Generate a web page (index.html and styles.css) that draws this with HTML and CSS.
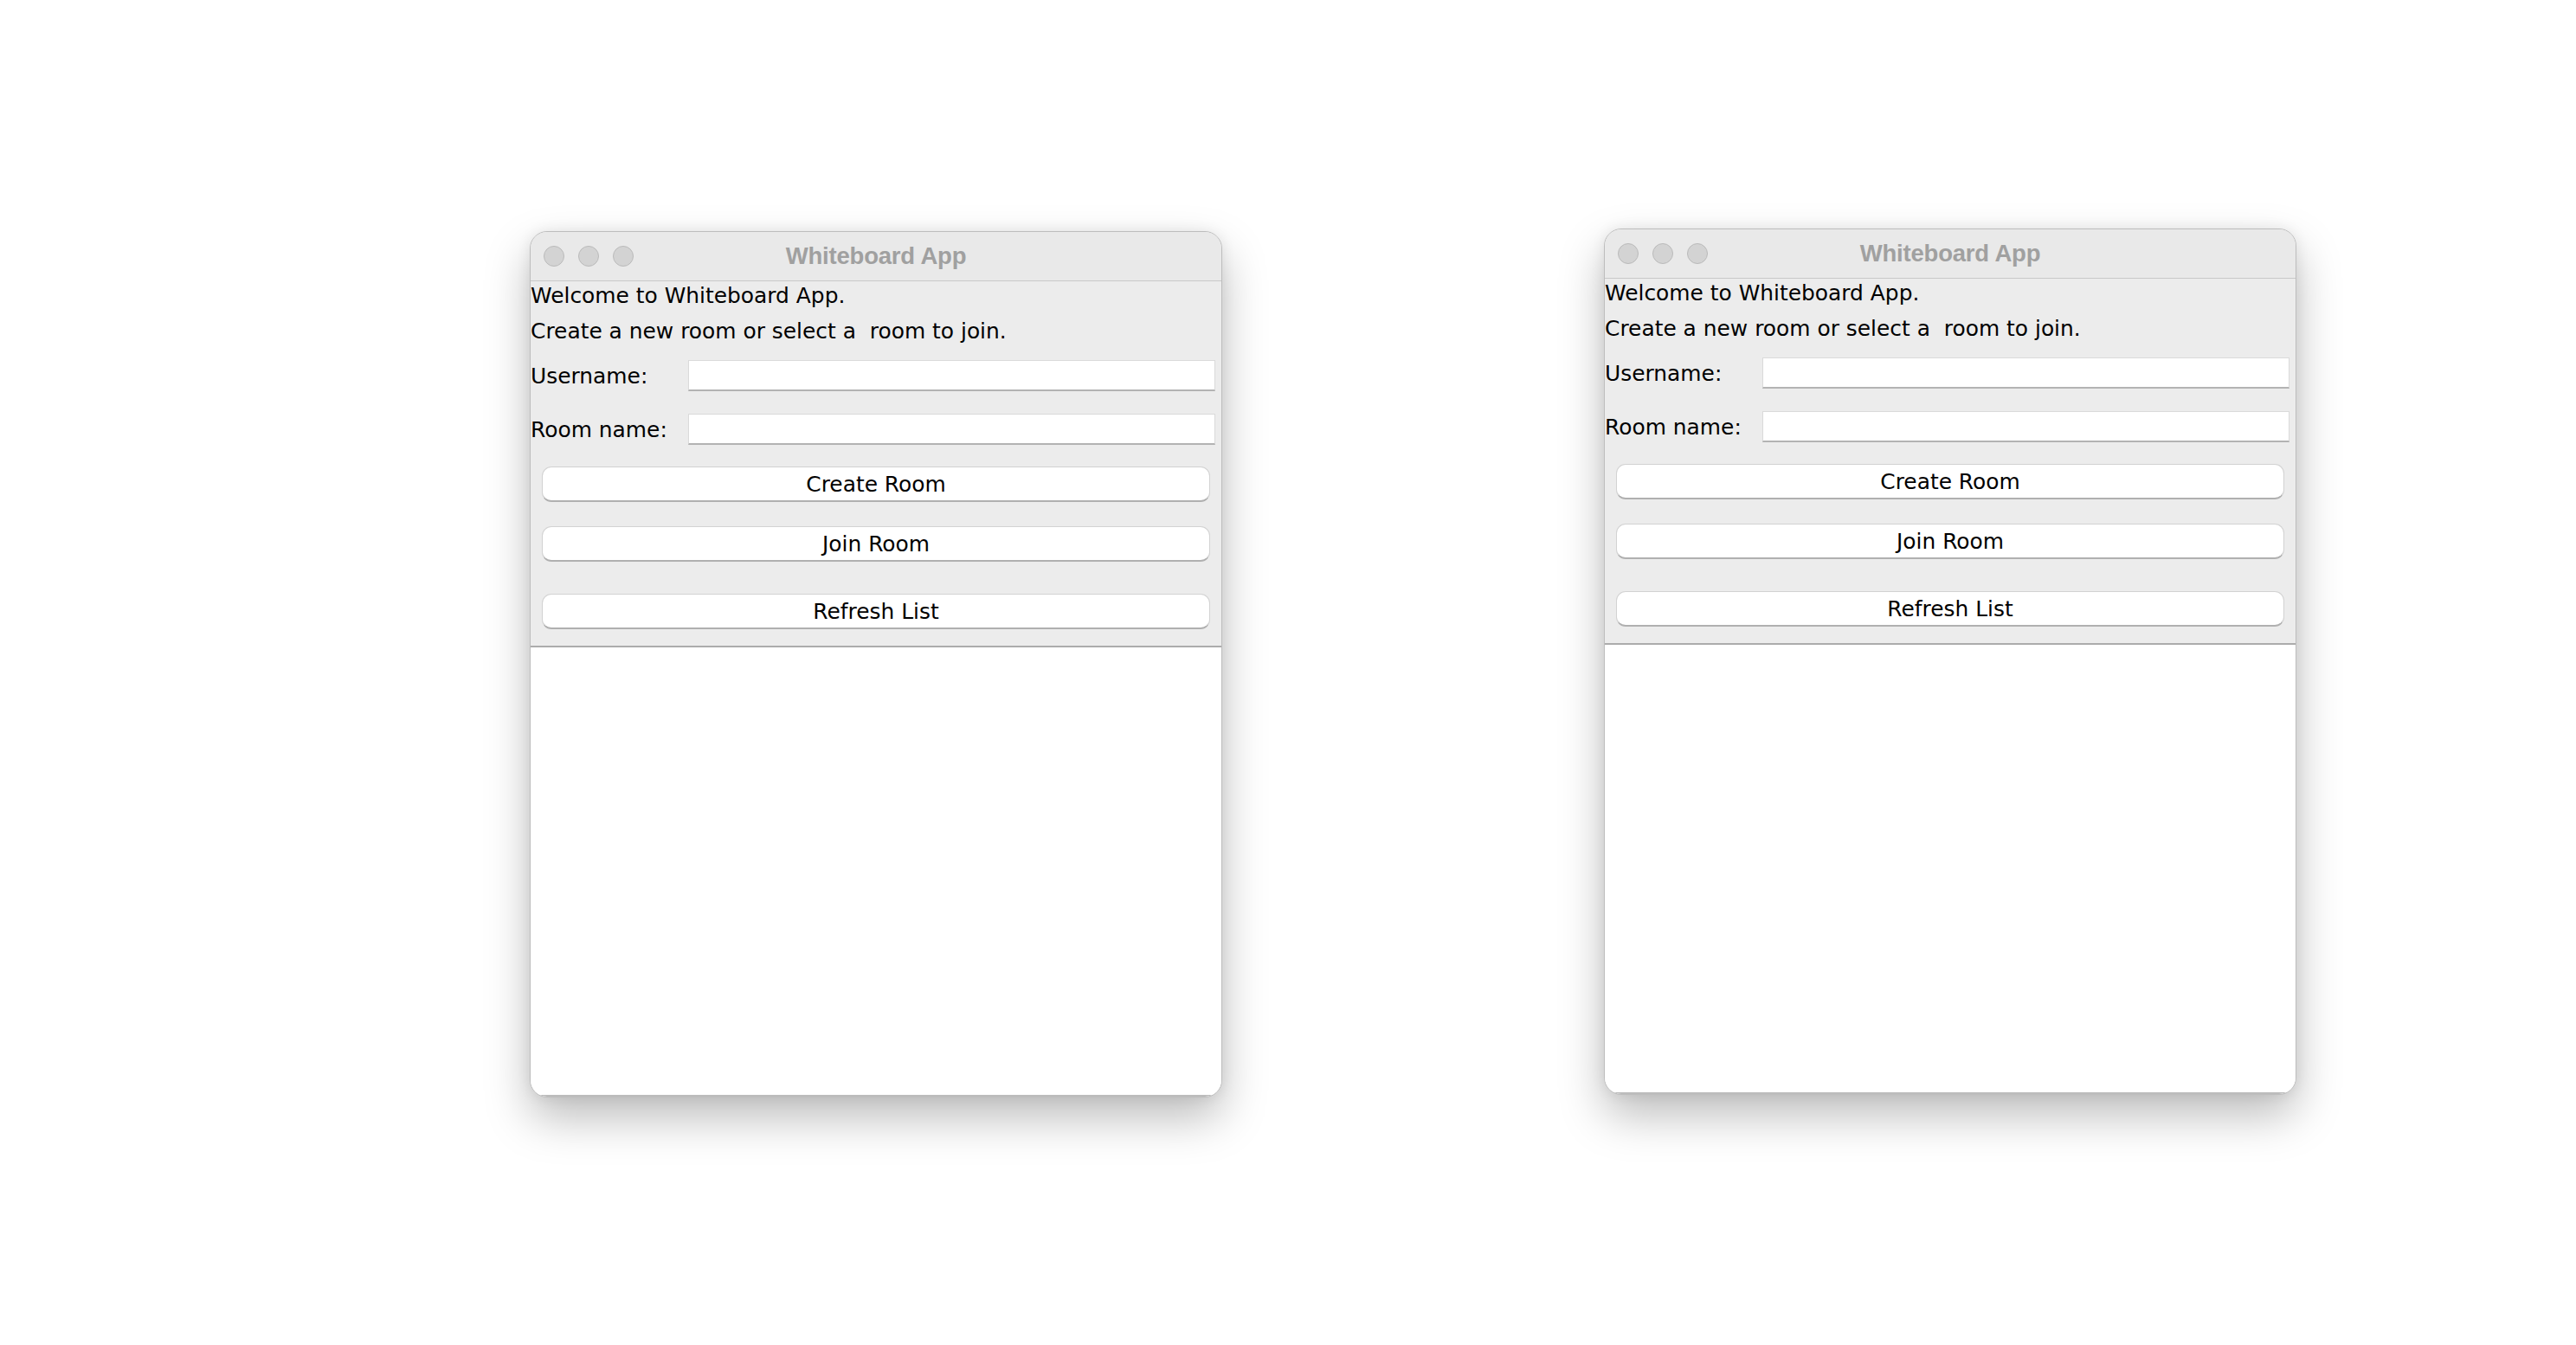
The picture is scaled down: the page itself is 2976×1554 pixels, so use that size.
FILE: index.html
```
<!DOCTYPE html>
<html lang="en">
<head>
<meta charset="utf-8">
<title>Whiteboard App</title>
<link rel="stylesheet" href="styles.css">
</head>
<body>
<div class="desk">
  <div class="window win-a">
    <div class="titlebar">
      <div class="lights"><span class="light"></span><span class="light"></span><span class="light"></span></div>
      <div class="title">Whiteboard App</div>
      <div class="spacer"></div>
    </div>
    <div class="content">
      <div class="line line-1">Welcome to Whiteboard App.</div>
      <div class="line line-2">Create a new room or select a  room to join.</div>
      <div class="field field-1"><span class="label">Username:</span><div class="input"></div></div>
      <div class="field field-2"><span class="label">Room name:</span><div class="input"></div></div>
      <div class="btn btn-1">Create Room</div>
      <div class="btn btn-2">Join Room</div>
      <div class="btn btn-3">Refresh List</div>
    </div>
    <div class="list"></div>
  </div>
  <div class="window win-b">
    <div class="titlebar">
      <div class="lights"><span class="light"></span><span class="light"></span><span class="light"></span></div>
      <div class="title">Whiteboard App</div>
      <div class="spacer"></div>
    </div>
    <div class="content">
      <div class="line line-1">Welcome to Whiteboard App.</div>
      <div class="line line-2">Create a new room or select a  room to join.</div>
      <div class="field field-1"><span class="label">Username:</span><div class="input"></div></div>
      <div class="field field-2"><span class="label">Room name:</span><div class="input"></div></div>
      <div class="btn btn-1">Create Room</div>
      <div class="btn btn-2">Join Room</div>
      <div class="btn btn-3">Refresh List</div>
    </div>
    <div class="list"></div>
  </div>
</div>
</body>
</html>
```
FILE: styles.css
```
html, body {
  margin: 0;
  padding: 0;
  background: #ffffff;
}
body {
  width: 2976px;
  height: 1554px;
  overflow: hidden;
  font-family: "DejaVu Sans", "Liberation Sans", sans-serif;
}
.desk {
  display: flex;
  align-items: flex-start;
  padding: 264px 0 0 612px;
  gap: 441px;
}
.window {
  box-sizing: border-box;
  width: 800px;
  height: 1001px;
  display: flex;
  flex-direction: column;
  background: #ececec;
  border: 1px solid #bdbdbd;
  border-radius: 20px;
  overflow: hidden;
  box-shadow: 0 24px 52px rgba(0, 0, 0, 0.26), 0 0 16px rgba(0, 0, 0, 0.08);
}
.win-a {
  margin-top: 3px;
}
.titlebar {
  height: 56px;
  flex: none;
  display: grid;
  grid-template-columns: 1fr auto 1fr;
  align-items: center;
  background: #e9e9e9;
  border-bottom: 1px solid #c8c8c8;
}
.lights {
  display: flex;
  gap: 16px;
  padding-left: 15px;
}
.light {
  box-sizing: border-box;
  width: 24px;
  height: 24px;
  border-radius: 50%;
  background: #d3d3d3;
  border: 1px solid #bababa;
}
.title {
  font-family: "Liberation Sans", Arial, sans-serif;
  font-weight: bold;
  font-size: 27.5px;
  color: #a0a0a0;
  letter-spacing: -0.2px;
}
.content {
  flex: none;
  display: flex;
  flex-direction: column;
  font-size: 24.9px;
  color: #000;
}
.line {
  white-space: pre;
}
.line-1 {
  line-height: 34px;
}
.line-2 {
  line-height: 48px;
}
.field {
  display: flex;
  align-items: center;
  padding-right: 7px;
}
.field-1 {
  margin-top: 9px;
}
.field-2 {
  margin-top: 26px;
}
.label {
  width: 182px;
  flex: none;
}
.input {
  box-sizing: border-box;
  flex: 1;
  height: 36px;
  background: #ffffff;
  border: 1px solid #dadada;
  border-bottom: 2px solid #b3b3b3;
}
.btn {
  box-sizing: border-box;
  height: 41px;
  margin: 0 13px;
  display: flex;
  align-items: center;
  justify-content: center;
  background: #ffffff;
  border: 1px solid #d2d2d2;
  border-bottom: 2px solid #b0b0b0;
  border-radius: 11px;
}
.btn-1 {
  margin-top: 25px;
}
.btn-2 {
  margin-top: 28px;
}
.btn-3 {
  margin-top: 37px;
}
.list {
  flex: 1;
  margin-top: 19px;
  background: #ffffff;
  border-top: 2px solid #acacac;
  border-bottom: 2px solid #bcbcbc;
}
```
